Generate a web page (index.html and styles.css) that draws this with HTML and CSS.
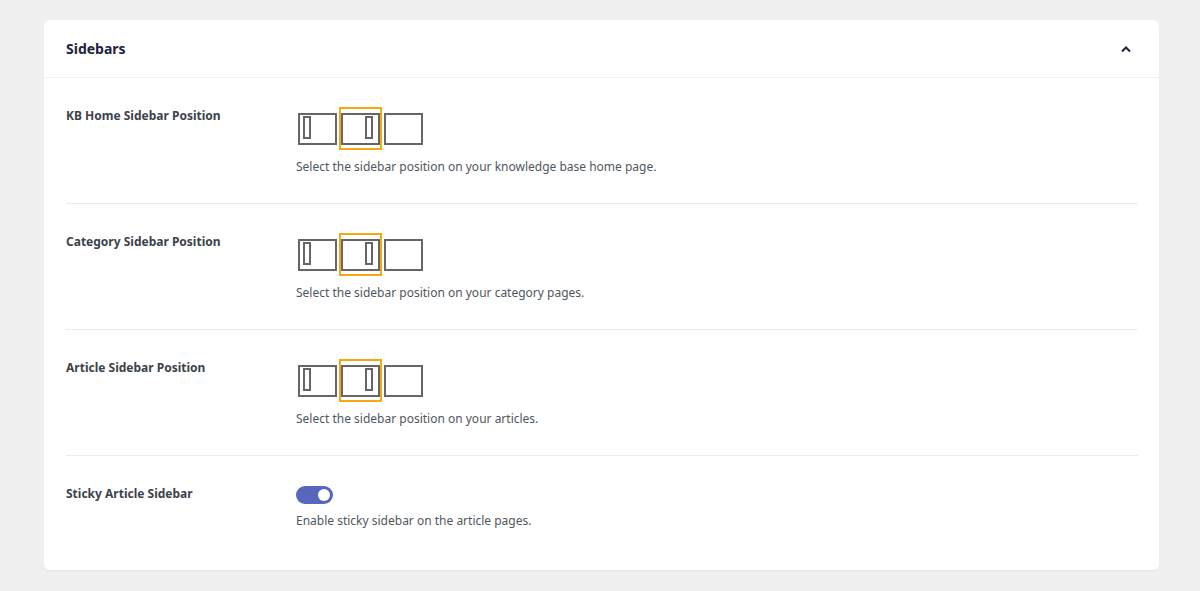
FILE: index.html
```html
<!DOCTYPE html>
<html lang="en">
<head>
  <meta charset="UTF-8" />
  <meta name="viewport" content="width=device-width, initial-scale=1" />
  <title>Sidebars</title>
  <link rel="stylesheet" href="styles.css">
</head>
<body>
  <div class="panel">
    <div class="panel-header">
      <h2>Sidebars</h2>
      <svg class="chevron" width="12" height="8" viewBox="0 0 12 8"><path d="M2 6.5 L6 2.5 L10 6.5" fill="none" stroke="#1d2340" stroke-width="2"/></svg>
    </div>

    <div class="panel-body">
      <div class="row">
        <div class="label">KB Home Sidebar Position</div>
        <div class="control">
          <div class="positions">
            <div class="pos">
              <svg width="39" height="32" viewBox="0 0 39 32"><rect x="1" y="1" width="37" height="30" fill="none" stroke="#666" stroke-width="2"/><rect x="6" y="4" width="6" height="21" fill="none" stroke="#666" stroke-width="2"/></svg>
            </div>
            <div class="pos active">
              <svg width="39" height="32" viewBox="0 0 39 32"><rect x="1" y="1" width="37" height="30" fill="none" stroke="#666" stroke-width="2"/><rect x="25" y="4" width="6" height="21" fill="none" stroke="#666" stroke-width="2"/></svg>
            </div>
            <div class="pos">
              <svg width="39" height="32" viewBox="0 0 39 32"><rect x="1" y="1" width="37" height="30" fill="none" stroke="#666" stroke-width="2"/></svg>
            </div>
          </div>
          <p class="desc">Select the sidebar position on your knowledge base home page.</p>
        </div>
      </div>

      <div class="row">
        <div class="label">Category Sidebar Position</div>
        <div class="control">
          <div class="positions">
            <div class="pos">
              <svg width="39" height="32" viewBox="0 0 39 32"><rect x="1" y="1" width="37" height="30" fill="none" stroke="#666" stroke-width="2"/><rect x="6" y="4" width="6" height="21" fill="none" stroke="#666" stroke-width="2"/></svg>
            </div>
            <div class="pos active">
              <svg width="39" height="32" viewBox="0 0 39 32"><rect x="1" y="1" width="37" height="30" fill="none" stroke="#666" stroke-width="2"/><rect x="25" y="4" width="6" height="21" fill="none" stroke="#666" stroke-width="2"/></svg>
            </div>
            <div class="pos">
              <svg width="39" height="32" viewBox="0 0 39 32"><rect x="1" y="1" width="37" height="30" fill="none" stroke="#666" stroke-width="2"/></svg>
            </div>
          </div>
          <p class="desc">Select the sidebar position on your category pages.</p>
        </div>
      </div>

      <div class="row">
        <div class="label">Article Sidebar Position</div>
        <div class="control">
          <div class="positions">
            <div class="pos">
              <svg width="39" height="32" viewBox="0 0 39 32"><rect x="1" y="1" width="37" height="30" fill="none" stroke="#666" stroke-width="2"/><rect x="6" y="4" width="6" height="21" fill="none" stroke="#666" stroke-width="2"/></svg>
            </div>
            <div class="pos active">
              <svg width="39" height="32" viewBox="0 0 39 32"><rect x="1" y="1" width="37" height="30" fill="none" stroke="#666" stroke-width="2"/><rect x="25" y="4" width="6" height="21" fill="none" stroke="#666" stroke-width="2"/></svg>
            </div>
            <div class="pos">
              <svg width="39" height="32" viewBox="0 0 39 32"><rect x="1" y="1" width="37" height="30" fill="none" stroke="#666" stroke-width="2"/></svg>
            </div>
          </div>
          <p class="desc">Select the sidebar position on your articles.</p>
        </div>
      </div>

      <div class="row last">
        <div class="label">Sticky Article Sidebar</div>
        <div class="control">
          <span class="toggle"><span class="knob"></span></span>
          <p class="desc">Enable sticky sidebar on the article pages.</p>
        </div>
      </div>
    </div>
  </div>
</body>
</html>
```

FILE: styles.css
```css
body {
  margin: 0;
  padding: 20px 41px 22px 44px;
  background-color: #f0f0f1;
  font-family: 'Noto Sans', 'Open Sans', sans-serif;
  color: #50575e;
}

.panel {
  background: #fff;
  border-radius: 6px;
  box-shadow: 0 1px 2px rgba(0, 0, 0, 0.04);
}

.panel-header {
  display: flex;
  align-items: center;
  justify-content: space-between;
  height: 57px;
  padding: 0 27px 0 22px;
  border-bottom: 1px solid #eff0f6;
}

.panel-header h2 {
  margin: 0;
  font-size: 14px;
  font-weight: 700;
  color: #1d2340;
}

.chevron {
  display: block;
}

.panel-body {
  padding: 0 21px 13px 22px;
}

.row {
  display: flex;
  padding: 29px 0 27px;
  border-bottom: 1px solid #e9ecef;
}

.row.last {
  border-bottom: none;
}

.label {
  width: 230px;
  flex-shrink: 0;
  font-size: 12px;
  line-height: 18px;
  font-weight: 700;
  color: #3c434a;
}

.positions {
  display: flex;
}

.pos {
  width: 39px;
  height: 39px;
  border: 2px solid transparent;
  display: flex;
  align-items: center;
  justify-content: center;
}

.pos svg {
  display: block;
}

.pos.active {
  border-color: #f7a80e;
}

.desc {
  margin: 8px 0 0;
  font-size: 12px;
  line-height: 18px;
  color: #50575e;
}

.toggle {
  display: block;
  position: relative;
  width: 37px;
  height: 18px;
  margin-top: 1px;
  border-radius: 9px;
  background: #5767bc;
}

.knob {
  position: absolute;
  right: 3px;
  top: 3px;
  width: 12px;
  height: 12px;
  border-radius: 50%;
  background: #fff;
}
```
